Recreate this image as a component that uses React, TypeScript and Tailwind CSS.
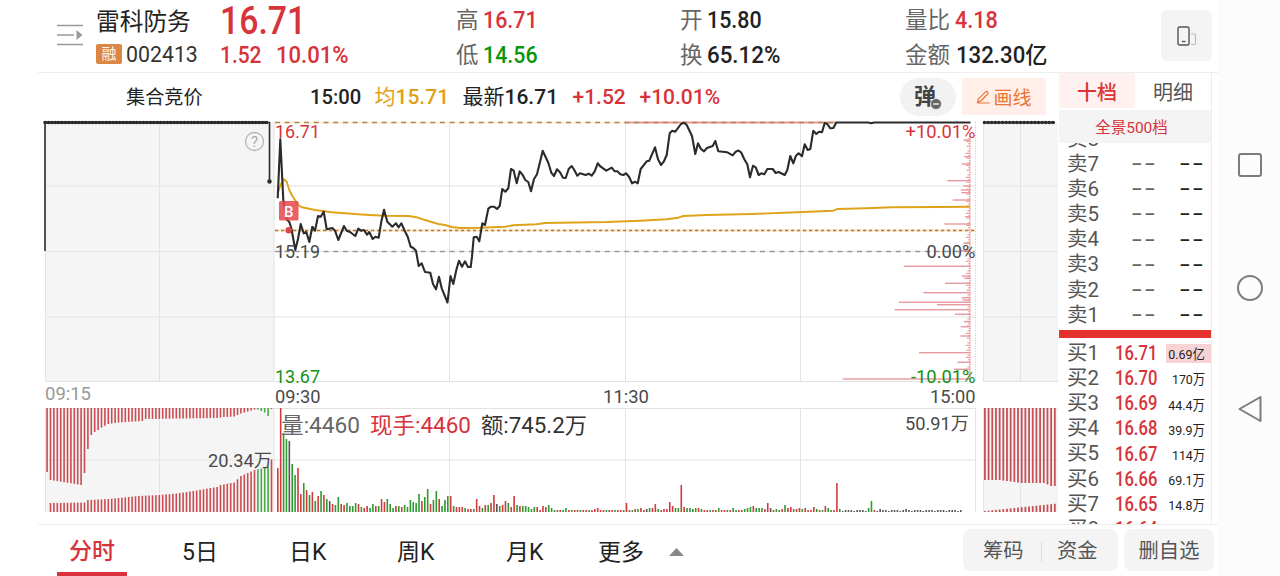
import { ReactNode } from 'react';
import clsx from 'clsx';

const RED = '#d8323a';
const GREEN = '#159015';
const GRID = '#e3e3e3';

type Point = [number, number];

const PRICE: Point[] = [
  [277.7, 198.3], [280.3, 139.3], [283.3, 200], [286.7, 219.3], [289.3, 222], [291.3, 228], [295.3, 250], [298, 239],
  [300.7, 224], [303.7, 233.3], [306.3, 232], [309.3, 242], [312.3, 226.7], [315, 230.7], [318, 216], [320.7, 216.7],
  [323.7, 211.7], [326.7, 229.3], [332.3, 228], [335, 230.7], [338.3, 240], [344, 226], [346.7, 230.7], [350, 232],
  [355.3, 236], [358.3, 228.7], [361, 230.7], [364, 230], [367, 234.7], [369.3, 232], [372.7, 239], [375.3, 236.7],
  [378.7, 237.7], [381.3, 221.7], [384, 209.7], [387.3, 221.7], [392.3, 226.7], [396, 223.3], [398.7, 227.3],
  [401.3, 223.3], [404.7, 230.7], [407.7, 236.7], [410.7, 246.7], [413.3, 248], [416, 250.7], [418.7, 266],
  [421.7, 263.3], [425, 272], [430.3, 272.7], [433, 284], [436, 289.3], [439, 276.7], [441.7, 288.3], [447.5, 302.5],
  [450.5, 276], [453.3, 284], [456.3, 270], [459, 260.7], [462, 266.7], [465, 261.3], [468, 267], [470.7, 267],
  [472, 256.7], [473.7, 237.3], [476.7, 236.7], [479.3, 241.3], [482.3, 223.3], [485, 225], [488.3, 208.7],
  [491, 206.7], [494, 206.7], [497, 209], [499.7, 206], [502.3, 189], [505.3, 191.7], [508.3, 188.3], [511, 169],
  [513.7, 170.7], [516.7, 183.3], [519.7, 171.3], [522.7, 175], [525.3, 180], [528.3, 182], [531, 191.3],
  [534, 179], [537, 174.3], [539.7, 163.3], [542.7, 150.7], [548.3, 162.7], [551.3, 172.7], [554, 176], [557, 169.3],
  [560, 172.3], [563, 177.7], [565.7, 178], [568.7, 169], [571.7, 166], [574.3, 170], [577.3, 175.7], [580, 173.3],
  [585.7, 175], [588.7, 173.7], [591.7, 175.7], [594.7, 171.3], [597.7, 163.3], [600.7, 166.7], [606.3, 170.7],
  [611.7, 167.7], [614.7, 171.3], [617.3, 171.3], [620.3, 174.3], [623.3, 175], [626, 173.3], [629, 176.7],
  [632, 183.3], [635, 181.7], [637.7, 183.3], [640.7, 169], [646.7, 161.3], [649.3, 160.7], [655, 147.3], [658, 159.3],
  [661, 165], [663.7, 161.7], [666.7, 155], [669.7, 133.3], [672.3, 130.7], [675.3, 131.7], [681, 124], [684, 122.7],
  [686.7, 125], [692, 136], [695.3, 154], [698, 143.3], [701, 149], [704, 151.3], [707, 148], [712.7, 146],
  [715.3, 141], [718.3, 151.3], [727.3, 152.3], [732.7, 155.3], [735.7, 151.7], [738.5, 150.5], [741.3, 152.7],
  [744.3, 159.3], [747.3, 164.3], [750, 177.3], [753, 165.7], [755.7, 167.3], [758.7, 175], [761.3, 173.3],
  [764.3, 174.3], [767.3, 169], [772.7, 169], [775.7, 173], [778.7, 172], [784.7, 175], [787.3, 170], [790.3, 156],
  [793.3, 163.3], [796, 155.7], [798.7, 153.3], [802, 156.3], [804.7, 144.3], [807.7, 150], [810.3, 149],
  [813.3, 130.7], [816.3, 134], [819, 131.7], [822, 132.3], [824.7, 123], [827.3, 124], [830.3, 128.3], [833.3, 128],
  [836.3, 122.5], [868.3, 122.5], [871.3, 123.2], [874, 122.5], [970.5, 122.5],
];

const AVERAGE: Point[] = [
  [277.7, 193.3], [281, 184], [284, 179.3], [286.7, 181.7], [289.3, 190], [292.3, 196], [298.3, 205], [301.7, 207.3],
  [315, 210], [331.7, 212.3], [365, 214.7], [384, 215.7], [408.3, 216], [416.7, 217.3], [428.3, 221], [438.3, 224],
  [445, 225], [451.7, 227], [460, 228], [480, 227.8], [505, 226.7], [513.3, 225.3], [536.7, 224.3], [545, 223],
  [606.7, 222], [640, 220.7], [666.7, 219.3], [678.3, 217.7], [683.3, 216], [706.7, 215], [740, 214.3], [751.7, 214],
  [796.7, 212.3], [833.3, 210.7], [837.3, 209], [866.7, 208.3], [891.7, 207.3], [940, 207], [970, 206.7],
];

// Opening part of the session, one entry per minute: colour letter + height
const OPENING_VOLUME =
  'r44 r104 g79 g73 k71 g48 g37 r44 r18 g29 r22 g17 r20 g11 r16 g21 r17 g13 k11 ' +
  'r8 g7 g15 r8 r7 g9 g6 g6 g9 r8 g5 r4 r6 g4 g8 r6 g6 r13 r10 g13 g8 g4 r6 g6 r5 g7 g5 g12 g10 g9 g18 r11 g15 g23 ' +
  'r8 g12 g21 r13 g6 g12 g16 r16 g6 r5 r5 r5 g4 r3 r3 g3 r13 r6 g4 r7 g7 r9 r17 k8 g6 r7 r11 g9 r5 r16 g7 r6 g6 g6 ' +
  'g5 g3 g5 r5 r2 r6 r5 g7 g4';

// Minutes that stand out in the quieter remainder
const LATER_VOLUME: Record<number, string> = {
  100: 'g4', 110: 'r3', 111: 'r4', 121: 'r9', 124: 'r3', 125: 'g3', 126: 'r4', 128: 'k3', 129: 'g4', 130: 'r4',
  131: 'r8', 132: 'g3', 134: 'r3', 135: 'r3', 136: 'r10', 137: 'r6', 138: 'g4', 139: 'g4', 140: 'r27', 141: 'r5',
  142: 'g4', 143: 'g4', 144: 'g3', 145: 'g4', 146: 'r4', 147: 'g3', 153: 'g4', 158: 'g4', 162: 'g3', 163: 'g4',
  164: 'g5', 165: 'r6', 166: 'g4', 167: 'g4', 168: 'g4', 169: 'r3', 170: 'r9', 171: 'k4', 173: 'g3', 175: 'r3',
  176: 'g7', 177: 'r4', 178: 'r5', 179: 'g3', 180: 'r3', 181: 'r4', 182: 'g3', 183: 'r4', 186: 'r5', 187: 'g3',
  190: 'r6', 191: 'g4', 194: 'r29', 195: 'g3', 205: 'g4', 206: 'g11', 207: 'r2', 209: 'k3', 218: 'k3',
};

const BAR_COLORS: Record<string, string> = { r: '#d03a40', g: '#2f9a2f', k: '#555555' };

function fillerVolume(i: number) {
  if (i >= 238) return 'k0';
  if (i > 195) return i % 4 === 0 ? 'k1' : 'k2';
  return i % 3 === 0 ? 'g2' : 'r2';
}

const VOLUME = (() => {
  const opening = OPENING_VOLUME.split(' ');
  return Array.from({ length: 240 }, (_, i) => opening[i] ?? LATER_VOLUME[i] ?? fillerVolume(i));
})();

// Chip distribution: [y, left edge]
const CHIPS: Point[] = [
  [140, 963.3], [156.7, 964.3], [164, 961.3], [180.7, 947.3], [186, 963.3], [190, 960.7], [192.7, 961.3], [200, 952.7],
  [216.7, 965], [224, 944.3], [243.3, 963.3], [250.7, 961], [266.3, 903.7], [276, 961.7], [278.3, 964.3],
  [283.3, 945], [292.7, 923.3], [297.7, 961.7], [300, 962.7], [302.3, 899], [304.7, 937], [309.7, 894.7],
  [314.3, 955], [321.7, 964], [326.7, 960.7], [336, 960.3], [352.7, 919], [362.3, 957.3], [369.3, 954],
  [379, 842.7],
];

const toPoints = (list: Point[]) => list.map((p) => p.join(',')).join(' ');

function interpolate(keys: Point[], i: number) {
  const next = keys.findIndex(([k]) => k >= i);
  if (next <= 0) return keys[Math.max(next, 0)][1];
  const [x0, y0] = keys[next - 1];
  const [x1, y1] = keys[next];
  return y0 + ((y1 - y0) * (i - x0)) / (x1 - x0);
}

const AUCTION_TOP: Point[] = [
  [0, 64], [1, 72], [10, 77], [11, 65], [12, 41], [13, 27], [14, 24], [15, 22], [16, 19.5], [18, 16], [21, 14.5],
  [28, 13], [29, 11], [50, 10], [52, 9], [55, 8.5], [57, 5.5], [59, 3.5], [61, 1.5], [62, 1.5], [63, 3], [64, 4.5],
  [65, 8], [66, 1],
];
const AUCTION_BOTTOM: Point[] = [
  [0, 0], [1, 9], [11, 9.5], [12, 12], [18, 13], [27, 16], [33, 17], [38, 18.5], [44, 21.5], [48, 24], [50, 25],
  [51, 27], [55, 29.5], [57, 36], [59, 39], [61, 42], [65, 45], [66, 52.5],
];

function Label({
  x,
  y,
  w,
  size = 18,
  fill = '#4a4a4a',
  children,
}: {
  x: number;
  y: number;
  w: number;
  size?: number;
  fill?: string;
  children: string;
}) {
  return (
    <text x={x} y={y} textLength={w} lengthAdjust="spacingAndGlyphs" fontSize={size} fill={fill}>
      {children}
    </text>
  );
}

function Grid({ left, right, columns }: { left: number; right: number; columns: number[] }) {
  return (
    <g stroke={GRID} strokeWidth={1}>
      {[186, 251.5, 317, 381.5, 408.5, 460].map((y) => (
        <line key={y} x1={left} x2={right} y1={y} y2={y} />
      ))}
      {columns.map((x) => (
        <path key={x} d={`M${x} 122V382M${x} 408V512`} />
      ))}
    </g>
  );
}

function AuctionChart() {
  return (
    <svg viewBox="38 115 235 409" className="h-[409px] w-[235px] shrink-0 overflow-visible">
      <path d="M45 122H274.500V382H45ZM45 408H274.500V512H45Z" fill="#f5f5f5" />
      <Grid left={45} right={275} columns={[45.5, 159.5, 274]} />
      {Array.from({ length: 67 }, (_, i) => {
        const x = 46.3 + i * 3.4;
        const fill = i > 61 && i < 66 ? '#4ba84b' : '#c94d52';
        const bottom = interpolate(AUCTION_BOTTOM, i);
        return (
          <g key={i} fill={fill}>
            <rect x={x} y={408} width={1.6} height={interpolate(AUCTION_TOP, i)} />
            <rect x={x} y={512 - bottom} width={1.6} height={bottom} />
          </g>
        );
      })}
      <path d="M45 251V122.500H269.500V181" fill="none" stroke="#2b2b2b" strokeWidth={1.6} />
      <path d="M44 122.500H268" stroke="#2b2b2b" strokeWidth={2.6} />
      <path d="M45 122.500H268" stroke="#2b2b2b" strokeWidth={3.6} strokeLinecap="round" strokeDasharray="0 3.4" />
      <circle cx={269.500} cy={181.500} r={2.2} fill="#2b2b2b" />
      <circle cx={254.500} cy={141.500} r={9} fill="none" stroke="#b5b5b5" strokeWidth={1.3} />
      <text x={254.500} y={147} textAnchor="middle" fontSize={15} fill="#aaaaaa">?</text>
      <Label x={45} y={399.500} w={46} fill="#999999">09:15</Label>
      <Label x={208} y={466.500} w={64}>20.34万</Label>
    </svg>
  );
}

function SessionChart() {
  return (
    <svg viewBox="273 115 707 409" className="h-[409px] w-[707px] shrink-0 overflow-visible">
      <Grid left={275} right={975} columns={[449.5, 625.5, 800.5]} />
      <line x1={975.500} x2={975.500} y1={408} y2={512} stroke={GRID} />
      <line x1={975.500} x2={975.500} y1={122} y2={382} stroke="#eab5b7" strokeDasharray="1 1.6" />

      <line x1={275} x2={625} y1={122.500} y2={122.500} stroke="#fff3dc" strokeWidth={2.500} />
      <line x1={625} x2={836} y1={122.500} y2={122.500} stroke="#ee9592" strokeWidth={2} />
      <line x1={275} x2={836} y1={122.500} y2={122.500} stroke="#a98a60" strokeWidth={1.3} strokeDasharray="5 4.700" />
      <line x1={275} x2={975} y1={251.500} y2={251.500} stroke="#999999" strokeWidth={1.5} strokeDasharray="5 4.700" />
      <line x1={275} x2={975} y1={230.400} y2={230.400} stroke="#fdeed2" strokeWidth={2.800} />
      <line x1={275} x2={975} y1={230.400} y2={230.400} stroke="#b9743a" strokeWidth={1.5} strokeDasharray="3.200 2.800" />

      <g fill="#e79a9e">
        {Array.from({ length: 102 }, (_, i) => {
          const w = 1.5 + ((i * 7) % 5) * 0.8;
          return <rect key={i} x={970.5 - w} y={136 + i * 2.4} width={w} height={1.1} />;
        })}
        {CHIPS.map(([y, left]) => (
          <rect key={y} x={left} y={y - 0.7} width={970.5 - left} height={1.4} />
        ))}
        <rect x={969.5} y={136} width={0.8} height={245} opacity={0.6} />
      </g>

      <polyline points={toPoints(AVERAGE)} fill="none" stroke="#dfa31a" strokeWidth={1.9} strokeLinejoin="round" />
      <polyline points={toPoints(PRICE)} fill="none" stroke="#2b2b2b" strokeWidth={2.1} strokeLinejoin="round" />

      <circle cx={288.700} cy={230.300} r={3.2} fill="#dd4549" />
      <rect x={279} y={201} width={19.500} height={19.500} rx={1.500} fill="#e5484d" opacity={0.86} />
      <text x={288.700} y={216.500} textAnchor="middle" fontSize={15} fontWeight={500} fill="#ffffff">B</text>

      {VOLUME.map((v, i) => {
        const h = Number(v.slice(1));
        return <rect key={i} x={277 + i * 2.882} y={512 - h} width={1.6} height={h} fill={BAR_COLORS[v[0]]} />;
      })}

      <Label x={275} y={137.500} w={45} fill={RED}>16.71</Label>
      <Label x={275} y={257.500} w={45}>15.19</Label>
      <Label x={275} y={383} w={45} fill={GREEN}>13.67</Label>
      <Label x={905.500} y={137.500} w={70} fill={RED}>+10.01%</Label>
      <Label x={926.500} y={257.500} w={49}>0.00%</Label>
      <Label x={911} y={383} w={64.500} fill={GREEN}>-10.01%</Label>
      <Label x={275} y={402.500} w={45.500}>09:30</Label>
      <Label x={603} y={402.500} w={46}>11:30</Label>
      <Label x={930} y={402.500} w={45.500}>15:00</Label>
      <Label x={281} y={433} w={79} size={21.5} fill="#666666">量:4460</Label>
      <Label x={370} y={433} w={101} size={21.5} fill={RED}>现手:4460</Label>
      <Label x={481} y={433} w={106} size={21.5} fill="#333333">额:745.2万</Label>
      <Label x={905} y={429.500} w={64}>50.91万</Label>
    </svg>
  );
}

function AfterHoursChart() {
  return (
    <svg viewBox="980 115 79 409" className="h-[409px] w-[79px] shrink-0">
      <path d="M983 122H1058V382H983ZM984 408H1058V512H984Z" fill="#f5f5f5" />
      <Grid left={983} right={1058} columns={[983.5, 1020.5]} />
      {Array.from({ length: 20 }, (_, i) => {
        const top = interpolate([[0, 72], [4, 72], [10, 75], [16, 75], [18, 78], [19, 78]], i);
        const bottom = 1 + i * 0.38;
        return (
          <g key={i} fill="#c75056">
            <rect x={984 + i * 3.68} y={408} width={1.8} height={top} />
            <rect x={984 + i * 3.68} y={512 - bottom} width={1.8} height={bottom} />
          </g>
        );
      })}
      <path d="M983 122.500H1055" stroke="#2b2b2b" strokeWidth={2.2} />
      <path d="M984.500 122.500H1055" stroke="#2b2b2b" strokeWidth={3.6} strokeLinecap="round" strokeDasharray="0 3.6" />
    </svg>
  );
}

function Num({ className, children }: { className?: string; children: ReactNode }) {
  return <span className={clsx('inline-block origin-left whitespace-nowrap font-medium', className)}>{children}</span>;
}

function Quote({ label, value, unit, className }: { label: string; value: string; unit?: string; className: string }) {
  return (
    <div className="flex h-[35px] items-center gap-1">
      <span className="text-[22.5px] text-[#666]">{label}</span>
      <Num className={clsx('text-[23px]', className)}>
        {value}
        {unit && <span className="font-normal">{unit}</span>}
      </Num>
    </div>
  );
}

function Header() {
  return (
    <header className="flex h-[73px] shrink-0 border-b border-[#eeeeee] leading-none">
      <svg viewBox="0 0 26 22" className="mt-[24px] ml-[19px] h-[22px] w-[26px] shrink-0" fill="none" stroke="#999" strokeWidth="1.5">
        <path d="M0 1.500H26M0 11H17M0 20.500H26" />
        <path d="M19.500 6L25.500 11L19.500 16Z" fill="#999" stroke="none" />
      </svg>
      <div className="ml-[13px] flex w-[124px] shrink-0 flex-col">
        <div className="flex h-[38px] items-center pt-[7px] text-[23.7px] text-[#222]">雷科防务</div>
        <div className="flex h-[32px] items-center gap-[4px]">
          <span className="flex h-5 w-[26px] items-center justify-center rounded-[2px] bg-[#dc8643] text-[15px] text-[#fff3e6]">融</span>
          <span className="pt-px text-[21.3px] text-[#333]">002413</span>
        </div>
      </div>
      <div className="w-[236px] shrink-0 text-[#d8323a]">
        <div className="h-[37px] pt-[2px]">
          <Num className="scale-x-[.89] text-[38px]">16.71</Num>
        </div>
        <div className="flex h-[35px] items-center pt-[2px]">
          <Num className="w-[55.5px] scale-x-[.91] text-[23px]">1.52</Num>
          <Num className="scale-x-[.96] text-[23px]">10.01%</Num>
        </div>
      </div>
      <div className="w-[224px] shrink-0 pt-[3px]">
        <Quote label="高" value="16.71" className="scale-x-[.93] text-[#d8323a]" />
        <Quote label="低" value="14.56" className="scale-x-[.93] text-[#0c960c]" />
      </div>
      <div className="w-[225px] shrink-0 pt-[3px]">
        <Quote label="开" value="15.80" className="scale-x-[.93] text-[#222]" />
        <Quote label="换" value="65.12%" className="scale-x-[.97] text-[#222]" />
      </div>
      <div className="w-[256px] shrink-0 pt-[3px]">
        <Quote label="量比" value="4.18" className="ml-px scale-x-[.94] text-[#d8323a]" />
        <Quote label="金额" value="132.30亿" className="ml-[2px] scale-x-[.965] text-[#222]" unit="" />
      </div>
      <button className="mt-[10px] flex h-[51px] w-[51px] shrink-0 items-center justify-center rounded-md bg-[#f4f4f4]">
        <svg viewBox="0 0 20 20" className="h-5 w-5" fill="none">
          <rect x="1" y="1" width="11" height="18" rx="1.500" stroke="#555" strokeWidth="1.4" />
          <path d="M5 15.500H8.500" stroke="#555" strokeWidth="1.4" />
          <path d="M14 8H17.500Q18.500 8 18.500 9V17Q18.500 18.500 17.500 18.500H14" stroke="#bbb" strokeWidth="1.2" />
        </svg>
      </button>
    </header>
  );
}

function Toolbar() {
  return (
    <div className="flex h-[42px] shrink-0 items-center pt-[5px] pl-[88px] text-[21px] leading-none text-[#222]">
      <span className="w-[183.5px] shrink-0 pt-[2px] text-[19.2px]">集合竞价</span>
      <Num className="w-[65px] shrink-0 scale-x-[.96] pt-[2px]">15:00</Num>
      <Num className="w-[88px] shrink-0 pt-[2px] text-[#dfa015]">
        <span className="font-normal">均</span>15.71
      </Num>
      <Num className="w-[110px] shrink-0 pt-[2px]">
        <span className="font-normal">最新</span>16.71
      </Num>
      <Num className="w-[67px] shrink-0 pt-[2px] text-[#d8323a]">+1.52</Num>
      <Num className="w-[260.5px] shrink-0 pt-[2px] text-[#d8323a]">+10.01%</Num>
      <button className="relative flex h-[38px] w-[56px] shrink-0 items-center rounded-full bg-[#f2f2f2] pl-[14px] text-[22px] font-bold text-[#444]">
        弹
        <svg viewBox="0 0 12 12" className="absolute top-[20px] left-[30px] h-3 w-3">
          <circle cx="6" cy="6" r="5.500" fill="#666" stroke="#f2f2f2" strokeWidth=".8" />
          <path d="M3 6H9" stroke="#fff" strokeWidth="1.3" />
        </svg>
      </button>
      <button className="ml-[6px] flex h-[37px] w-[84px] shrink-0 items-center justify-center gap-[3px] rounded-[3px] bg-[#ffefe8] text-[19px] text-[#ec7434]">
        <svg viewBox="0 0 14 14" className="h-[14px] w-[14px]" fill="none" stroke="#ec7434" strokeWidth="1.2" strokeLinejoin="round">
          <path d="M1.500 12.500L2.500 8.800L9.500 1.800Q10.500 1 11.500 2Q12.500 3 11.700 4L4.800 11L1.500 12.500ZM1.500 13H13.500" />
        </svg>
        <span className="pt-[3px]">画线</span>
      </button>
    </div>
  );
}

const BIDS = [
  ['1', '16.71', '0.69亿'],
  ['2', '16.70', '170万'],
  ['3', '16.69', '44.4万'],
  ['4', '16.68', '39.9万'],
  ['5', '16.67', '114万'],
  ['6', '16.66', '69.1万'],
  ['7', '16.65', '14.8万'],
  ['8', '16.64', ''],
];

function Dashes({ className }: { className: string }) {
  return <span className={clsx('origin-left scale-x-[1.6] text-[22px] tracking-[2px]', className)}>--</span>;
}

function OrderBook() {
  return (
    <aside className="flex w-[153px] shrink-0 flex-col overflow-hidden border-r border-[#ececec] leading-none">
      <div className="flex h-[37px] shrink-0 text-[20px]">
        <div className="flex h-[35px] w-[76px] items-center justify-center bg-[#fff1f0] pt-[4px] font-medium text-[#dd3535]">十档</div>
        <div className="flex h-[35px] flex-1 items-center justify-center pt-[4px] text-[#555]">明细</div>
      </div>
      <div className="flex h-[33px] shrink-0 items-center justify-center bg-[#f4f4f4] pt-[4px] pr-[7px] text-[15.5px] text-[#d8323a]">全景500档</div>
      <div className="flex h-[187px] shrink-0 flex-col justify-end overflow-hidden pb-[2.500px]">
        {[8, 7, 6, 5, 4, 3, 2, 1].map((n) => (
          <div key={n} className="flex h-[25.15px] shrink-0 items-center pl-[8px] text-[#555]">
            <span className="w-[65px] shrink-0 text-[20.5px]">卖{n}</span>
            <Dashes className="w-[48px] text-[#666]" />
            <Dashes className="text-[#222]" />
          </div>
        ))}
      </div>
      <div className="h-[8px] shrink-0 bg-[#e5322f]" />
      <div className="min-h-0 flex-1 overflow-hidden pt-[2.500px]">
        {BIDS.map(([n, price, volume]) => (
          <div key={n} className="flex h-[25.15px] items-center pl-[8px] text-[#555]">
            <span className="w-[48px] shrink-0 text-[20.5px]">买{n}</span>
            <Num className="w-[51px] shrink-0 scale-x-[.83] text-[20px] text-[#d8323a]">{price}</Num>
            <span
              className={clsx(
                'flex h-[19px] w-[45px] items-center justify-end pt-[4px] pr-[6px] text-[13.5px] text-[#222]',
                n === '1' && 'bg-[#f8d3d5]',
              )}
            >
              <span className="inline-block origin-right scale-x-[.92] whitespace-nowrap">{volume}</span>
            </span>
          </div>
        ))}
      </div>
    </aside>
  );
}

function Footer() {
  return (
    <footer className="flex h-[52px] shrink-0 border-t border-[#eeeeee] text-[23px] leading-none text-[#222]">
      <div className="ml-[19px] flex h-[51px] w-[70px] shrink-0 items-center justify-center border-b-[4px] border-[#d8323a] pt-[6px] font-medium text-[#d8323a]">
        分时
      </div>
      <div className="ml-[55px] flex items-center pt-[3px]">
        <span className="w-[107px]">5日</span>
        <span className="w-[108px]">日K</span>
        <span className="w-[109px]">周K</span>
        <span className="w-[92px]">月K</span>
        <span className="w-[71px]">更多</span>
        <svg viewBox="0 0 15 8" className="h-2 w-[15px]" fill="#888">
          <path d="M7.500 0L15 8H0Z" />
        </svg>
      </div>
      <div className="mt-[4px] mr-[4px] ml-auto flex h-[42px] gap-[6px] text-[20.3px] text-[#555]">
        <div className="flex w-[155px] items-center rounded-lg bg-[#f4f4f4] pt-[3px] pl-[20px]">
          <span className="w-[58px]">筹码</span>
          <span className="h-5 w-px bg-[#dddddd]" />
          <span className="ml-[15px]">资金</span>
        </div>
        <div className="flex w-[90px] items-center justify-center rounded-lg bg-[#f4f4f4] pt-[3px]">删自选</div>
      </div>
    </footer>
  );
}

function SystemNav() {
  return (
    <nav className="flex w-[62px] shrink-0 flex-col items-center bg-[#fcfcfc] pt-[153px] pl-px">
      <div className="h-[24px] w-[24px] rounded-[3px] border-2 border-[#7c7c7c]" />
      <div className="mt-[98px] h-[26px] w-[26px] rounded-full border-2 border-[#7c7c7c]" />
      <svg viewBox="0 0 24 28" className="mt-[94px] h-[28px] w-[24px]" fill="none" stroke="#7c7c7c" strokeWidth="2" strokeLinejoin="round">
        <path d="M1.500 14L22.500 2V26Z" />
      </svg>
    </nav>
  );
}

export default function App() {
  return (
    <div className="flex h-[576px] w-[1280px] overflow-hidden bg-white pl-[38px] font-['Roboto','Noto_Sans_CJK_SC',sans-serif]">
      <div className="flex w-[1180px] shrink-0 flex-col">
        <Header />
        <main className="flex h-[451px] shrink-0">
          <section className="flex w-[1021px] shrink-0 flex-col">
            <Toolbar />
            <div className="flex">
              <AuctionChart />
              <SessionChart />
              <AfterHoursChart />
            </div>
          </section>
          <OrderBook />
        </main>
        <Footer />
      </div>
      <SystemNav />
    </div>
  );
}
